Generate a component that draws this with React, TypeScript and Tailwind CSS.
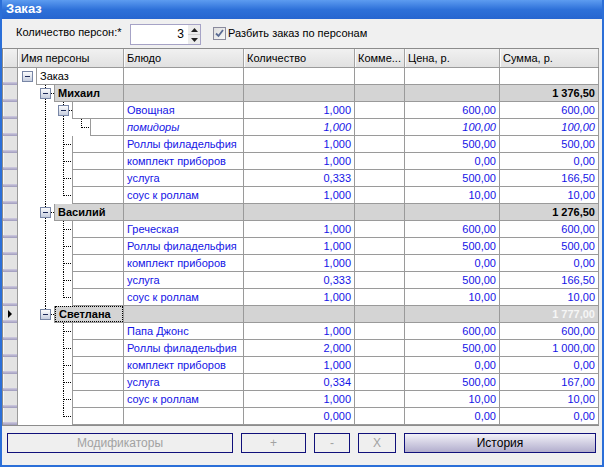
import React from "react";

type Kind = "root" | "person" | "item";

interface Row {
  kind: Kind;
  level: number;
  name?: string;
  dish?: string;
  qty?: string;
  price?: string;
  sum?: string;
  guides: number[];
  last?: boolean;
  button?: boolean;
  italic?: boolean;
  focused?: boolean;
}

const item = (dish: string, qty: string, price: string, sum: string, guides: number[], last = false): Row => ({
  kind: "item",
  level: 2,
  dish,
  qty,
  price,
  sum,
  guides,
  last,
});

const rows: Row[] = [
  { kind: "root", level: 0, name: "Заказ", guides: [], button: true },
  { kind: "person", level: 1, name: "Михаил", sum: "1 376,50", guides: [], button: true },
  { ...item("Овощная", "1,000", "600,00", "600,00", [1]), button: true },
  { kind: "item", level: 3, dish: "помидоры", qty: "1,000", price: "100,00", sum: "100,00", guides: [1, 2], last: true, italic: true },
  item("Роллы филадельфия", "1,000", "500,00", "500,00", [1]),
  item("комплект приборов", "1,000", "0,00", "0,00", [1]),
  item("услуга", "0,333", "500,00", "166,50", [1]),
  item("соус к роллам", "1,000", "10,00", "10,00", [1], true),
  { kind: "person", level: 1, name: "Василий", sum: "1 276,50", guides: [], button: true },
  item("Греческая", "1,000", "600,00", "600,00", [1]),
  item("Роллы филадельфия", "1,000", "500,00", "500,00", [1]),
  item("комплект приборов", "1,000", "0,00", "0,00", [1]),
  item("услуга", "0,333", "500,00", "166,50", [1]),
  item("соус к роллам", "1,000", "10,00", "10,00", [1], true),
  { kind: "person", level: 1, name: "Светлана", sum: "1 777,00", guides: [], button: true, last: true, focused: true },
  item("Папа Джонс", "1,000", "600,00", "600,00", []),
  item("Роллы филадельфия", "2,000", "500,00", "1 000,00", []),
  item("комплект приборов", "1,000", "0,00", "0,00", []),
  item("услуга", "0,334", "500,00", "167,00", []),
  item("соус к роллам", "1,000", "10,00", "10,00", []),
  item("", "0,000", "0,00", "0,00", [], true),
];

// dotted tree connectors + expand box, drawn in the indent area of the name column
function Tree({ r }: { r: Row }) {
  const W = 18 * (r.level + 1);
  const cx = 9 + 18 * r.level;
  const x = cx + 0.5;
  const segs: React.ReactNode[] = [];
  r.guides.forEach((g) => {
    const gx = 9 + 18 * g + 0.5;
    segs.push(<line key={"g" + g} x1={gx} y1={0} x2={gx} y2={17} />);
  });
  if (r.level > 0) {
    if (r.button) {
      segs.push(<line key="a" x1={x} y1={0} x2={x} y2={3} />);
      if (!r.last) segs.push(<line key="b" x1={x} y1={14} x2={x} y2={17} />);
      segs.push(<line key="h" x1={cx + 6} y1={8.5} x2={W} y2={8.5} />);
    } else {
      segs.push(<line key="v" x1={x} y1={0} x2={x} y2={r.last ? 9 : 17} />);
      segs.push(<line key="h" x1={cx + 1} y1={8.5} x2={W} y2={8.5} />);
    }
  }
  return (
    <svg width={W} height={17} className="shrink-0" shapeRendering="crispEdges">
      <defs>
        <linearGradient id="bx" x1="0" y1="0" x2="0" y2="1">
          <stop offset="0" stopColor="#ffffff" />
          <stop offset="1" stopColor="#c3cbdd" />
        </linearGradient>
      </defs>
      <g stroke="#000" strokeWidth={1} strokeDasharray="1 1">
        {segs}
      </g>
      {r.button && (
        <g>
          <rect x={cx - 4.5} y={3.5} width={10} height={10} fill="url(#bx)" stroke="#7886a6" />
          <line x1={cx - 2} y1={8.5} x2={cx + 3} y2={8.5} stroke="#1e2b5a" />
        </g>
      )}
    </svg>
  );
}

function Indicator({ active }: { active?: boolean }) {
  return (
    <div className="relative flex w-[15px] shrink-0 flex-col border-r border-[#9a9a9a]">
      <div className="flex-1 bg-[#e3e3e3] shadow-[inset_1px_0_0_#f7f7f7]" />
      <div className="h-[3px] bg-gradient-to-b from-[#cfcbe0] to-[#9f9bbd]" />
      {active && (
        <svg width={5} height={8} className="absolute left-[5px] top-[4px]">
          <path d="M0 0 L4 4 L0 8 Z" fill="#000" />
        </svg>
      )}
    </div>
  );
}

function GridRow({ r }: { r: Row }) {
  const gray = r.kind === "person";
  const bg = gray ? "bg-[#d4d4d4]" : "bg-white";
  const it = r.italic ? "italic" : "";
  const line = "border-b border-r border-[#9a9a9a]";
  return (
    <div className="flex h-[17px] text-[11px] leading-[16px]">
      <Indicator active={r.focused} />
      <div className="flex w-[106px] shrink-0 bg-white">
        <Tree r={r} />
        <div className={`min-w-0 flex-1 border-l ${line} ${bg}`}>
          {r.kind === "root" && <div className="pl-[3px] text-black">{r.name}</div>}
          {r.kind === "person" && (
            <div className={`h-full pl-[3px] font-bold text-black ${r.focused ? "border border-dotted border-black leading-[14px]" : ""}`}>
              {r.name}
            </div>
          )}
        </div>
      </div>
      <div className={`w-[120px] shrink-0 truncate pl-[3px] text-[#1414e6] ${line} ${bg} ${it}`}>{r.dish}</div>
      <div className={`w-[111px] shrink-0 pr-[3px] text-right text-[#1414e6] ${line} ${bg} ${it}`}>{r.qty}</div>
      <div className={`w-[50px] shrink-0 ${line} ${bg}`} />
      <div className={`w-[95px] shrink-0 pr-[3px] text-right text-[#1414e6] ${line} ${bg} ${it}`}>{r.price}</div>
      <div
        className={`w-[99px] shrink-0 pr-[3px] text-right ${line} ${bg} ${it} ${
          gray ? (r.focused ? "font-bold text-[#f6f6f6]" : "font-bold text-black") : "text-[#1414e6]"
        }`}
      >
        {r.sum}
      </div>
    </div>
  );
}

function HeaderCell({ w, label }: { w: string; label?: string }) {
  return (
    <div className={`${w} shrink-0 border-r border-[#a3a3a3] pl-[3px] shadow-[inset_1px_0_0_#fbfbfb]`}>{label}</div>
  );
}

function Btn({ w, label, active }: { w: string; label: string; active?: boolean }) {
  return (
    <div
      className={`${w} flex h-[20px] items-center justify-center border border-[#10107a] text-[12px] ${
        active ? "bg-gradient-to-b from-[#f2f1f8] to-[#b2aecd] text-black" : "bg-[#efefef] text-[#a2a2a2]"
      }`}
    >
      {label}
    </div>
  );
}

export default function App() {
  return (
    <div className="h-[467px] w-[604px] border-b-2 border-l-2 border-r-2 border-[#2b6fd8] bg-[#f0f0f0] font-['Liberation_Sans',Arial,sans-serif] text-black">
      {/* title bar */}
      <div className="h-[19px] bg-gradient-to-b from-[#5d9cf0] via-[#2e71d9] to-[#2766d0] pl-[4px] text-[13px] font-bold leading-[18px] text-white">
        Заказ
      </div>

      {/* top controls */}
      <div className="flex h-[29px] items-start text-[11px]">
        <div className="ml-[14px] mt-[6px] w-[108px] leading-[14px]">Количество персон:*</div>
        <div className="ml-[6px] mt-[5px] flex h-[21px] w-[71px] border border-[#a6a3c6] bg-white">
          <div className="flex-1 pr-[4px] text-right text-[12px] leading-[19px]">3</div>
          <div className="flex w-[12px] flex-col">
            <div className="flex flex-1 items-center justify-center border-b border-[#d0d0d0] bg-[#ececec]">
              <svg width={7} height={4}>
                <path d="M3.5 0 L7 4 L0 4 Z" fill="#222" />
              </svg>
            </div>
            <div className="flex flex-1 items-center justify-center bg-[#ececec]">
              <svg width={7} height={4}>
                <path d="M0 0 L7 0 L3.5 4 Z" fill="#222" />
              </svg>
            </div>
          </div>
        </div>
        <div className="ml-[12px] mt-[8px] flex h-[13px] w-[13px] items-center justify-center border border-[#8a8a9c] bg-gradient-to-br from-[#dedede] to-[#f7f7f7]">
          <svg width={9} height={9} viewBox="0 0 9 9">
            <path d="M1 4.5 L3.5 7 L8 1" stroke="#5a6b94" strokeWidth={1.8} fill="none" />
          </svg>
        </div>
        <div className="ml-[2px] mt-[7px] leading-[14px]">Разбить заказ по персонам</div>
      </div>

      {/* tree grid */}
      <div className="w-[597px] border border-[#8c8c8c] bg-white">
        <div className="flex h-[19px] border-b border-[#9a9a9a] bg-gradient-to-b from-[#f1f1f1] to-[#e1e1e1] text-[11px] leading-[18px]">
          <HeaderCell w="w-[15px]" />
          <HeaderCell w="w-[106px]" label="Имя персоны" />
          <HeaderCell w="w-[120px]" label="Блюдо" />
          <HeaderCell w="w-[111px]" label="Количество" />
          <HeaderCell w="w-[50px]" label="Комме..." />
          <HeaderCell w="w-[95px]" label="Цена, р." />
          <HeaderCell w="w-[99px]" label="Сумма, р." />
        </div>
        {rows.map((r, i) => (
          <GridRow key={i} r={r} />
        ))}
      </div>

      {/* buttons */}
      <div className="mt-[7px] flex gap-2 pl-[5px]">
        <Btn w="w-[226px]" label="Модификаторы" />
        <Btn w="w-[65px]" label="+" />
        <Btn w="w-[36px]" label="-" />
        <Btn w="w-[38px]" label="X" />
        <Btn w="w-[192px]" label="История" active />
      </div>
    </div>
  );
}
